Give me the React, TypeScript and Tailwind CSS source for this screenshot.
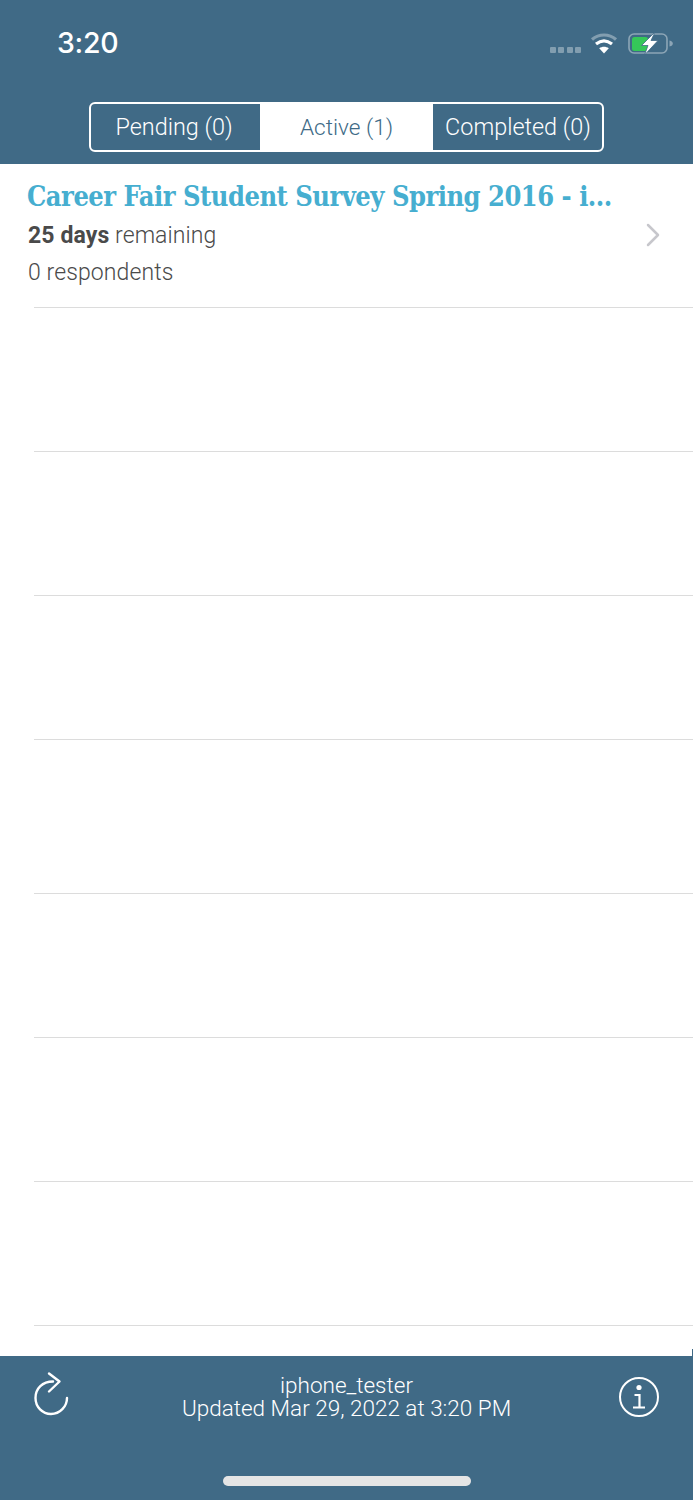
import { ChevronRight } from 'lucide-react';

function WifiIcon() {
  return (
    <svg width="28" height="22" viewBox="0 0 28 22" fill="none" className="block">
      <path d="M2 7.5C9 1.5 19 1.5 26 7.5" stroke="#fff" strokeOpacity="0.35" strokeWidth="3.2" />
      <path d="M6 12C11 8 17 8 22 12" stroke="#fff" strokeWidth="3.2" />
      <path d="M14 21.5L9.2 16.2C12 14.2 16 14.2 18.8 16.2Z" fill="#fff" />
    </svg>
  );
}

function BatteryIcon() {
  return (
    <svg width="46" height="22" viewBox="0 0 46 22" fill="none" className="block">
      <rect x="1" y="2" width="38" height="19" rx="5" stroke="#fff" strokeOpacity="0.4" strokeWidth="1.6" />
      <path d="M41.5 8.5C43.8 9 44.8 10 44.8 11.5C44.8 13 43.8 14 41.5 14.5Z" fill="#fff" fillOpacity="0.4" />
      <rect x="4" y="5" width="16" height="14" rx="2.5" fill="#35c759" />
      <path d="M27 0L13.5 13.5H20L16.5 23L30 8.5H23Z" fill="#fff" stroke="#406a86" strokeWidth="0.8" />
    </svg>
  );
}

function RefreshIcon() {
  return (
    <svg width="38" height="46" viewBox="0 0 38 46" fill="none" stroke="#fff" strokeWidth="2.4" className="block">
      <path d="M21 10.5C10.5 10.5 3.5 17.5 3.5 27C3.5 36 10.5 43 19 43C28 43 35 35.5 35 27" strokeLinecap="round" />
      <path d="M17 2.5L27.5 10.5L17 20.5" strokeLinecap="round" strokeLinejoin="round" />
    </svg>
  );
}

function InfoIcon() {
  return (
    <div className="w-10 h-10 rounded-full border-[2.5px] border-white flex items-center justify-center">
      <svg width="14" height="26" viewBox="0 0 14 26" fill="none" className="block">
        <circle cx="7" cy="3.5" r="2.6" fill="#fff" />
        <path d="M2.5 11H7.5V23.5M1 23.5H13" stroke="#fff" strokeWidth="2.2" />
      </svg>
    </div>
  );
}

const rows = [
  'h-[144px]',
  'h-[144px]',
  'h-[144px]',
  'h-[154px]',
  'h-[144px]',
  'h-[144px]',
  'h-[144px]',
];

export default function App() {
  return (
    <div className="w-[693px] h-[1500px] flex flex-col bg-white overflow-hidden font-['Roboto',sans-serif]">
      <header className="h-[164px] shrink-0 bg-[#406a86] flex flex-col">
        <div className="h-[102px] flex justify-between pl-[57px] pr-[19px] pt-[26px]">
          <span className="text-[28.5px] leading-[34px] font-medium text-white font-['Inter',sans-serif] tracking-[-0.3px]">3:20</span>
          <div className="flex items-start pt-[6px]">
            <div className="flex gap-[2.5px] mt-[15px] mr-[9px]">
              <span className="w-[6px] h-[6px] rounded-[1px] bg-white/35" />
              <span className="w-[6px] h-[6px] rounded-[1px] bg-white/35" />
              <span className="w-[6px] h-[6px] rounded-[1px] bg-white/35" />
              <span className="w-[6px] h-[6px] rounded-[1px] bg-white/35" />
            </div>
            <WifiIcon />
            <div className="ml-[10px]">
              <BatteryIcon />
            </div>
          </div>
        </div>
        <div className="ml-[89px] w-[515px] h-[50px] flex border-2 border-white rounded-[6px] text-[23.4px] font-light overflow-hidden">
          <div className="w-[169px] pt-[1px] pr-[3px] flex items-center justify-center text-white">Pending (0)</div>
          <div className="w-[173px] pt-[1px] flex items-center justify-center bg-white text-[#406a86] text-[22.6px]">Active (1)</div>
          <div className="flex-1 pt-[1px] pl-[1px] flex items-center justify-center text-white whitespace-nowrap">Completed (0)</div>
        </div>
      </header>

      <main className="flex-1">
        <div className="h-[144px] relative pl-[27px] pt-[14px]">
          <h2 className="text-[27px] leading-[38px] font-bold text-[#46aed0] tracking-[-0.5px] font-['DejaVu_Serif_Condensed','DejaVu_Serif',serif] whitespace-nowrap">
            Career Fair Student Survey Spring 2016 - i...
          </h2>
          <p className="ml-[1px] mt-[2px] text-[23px] leading-[36px] font-light text-[#4a4a4a] tracking-[0.1px]">
            <span className="font-bold">25 days</span> remaining
          </p>
          <p className="ml-[1px] mt-[1px] text-[23px] leading-[36px] font-light text-[#4a4a4a] tracking-[0.1px]">0 respondents</p>
          <ChevronRight className="absolute right-[20px] top-[51px] text-[#c7c7cc]" size={40} strokeWidth={1.5} />
          <div className="absolute left-[34px] right-0 bottom-0 h-[1px] bg-[#dcdcdc]" />
        </div>
        {rows.map((h, i) => (
          <div key={i} className={`${h} flex items-end pl-[34px]`}>
            <div className="w-full h-[1px] bg-[#dcdcdc]" />
          </div>
        ))}
      </main>

      <footer className="h-[144px] shrink-0 bg-[#406a86] relative flex flex-col items-center pt-[17px]">
        <p className="text-[22.5px] leading-[24px] font-light text-white">iphone_tester</p>
        <p className="-mt-[1px] text-[22.5px] leading-[24px] font-light text-white">Updated Mar 29, 2022 at 3:20 PM</p>
        <div className="absolute right-0 -top-[7px] w-[1px] h-[7px] bg-[#406a86]" />
        <div className="absolute left-[32px] top-[15px]">
          <RefreshIcon />
        </div>
        <div className="absolute right-[34px] top-[21px]">
          <InfoIcon />
        </div>
        <div className="absolute left-[223px] top-[120px] w-[248px] h-[10px] rounded-full bg-[#e5e5e5]" />
      </footer>
    </div>
  );
}
